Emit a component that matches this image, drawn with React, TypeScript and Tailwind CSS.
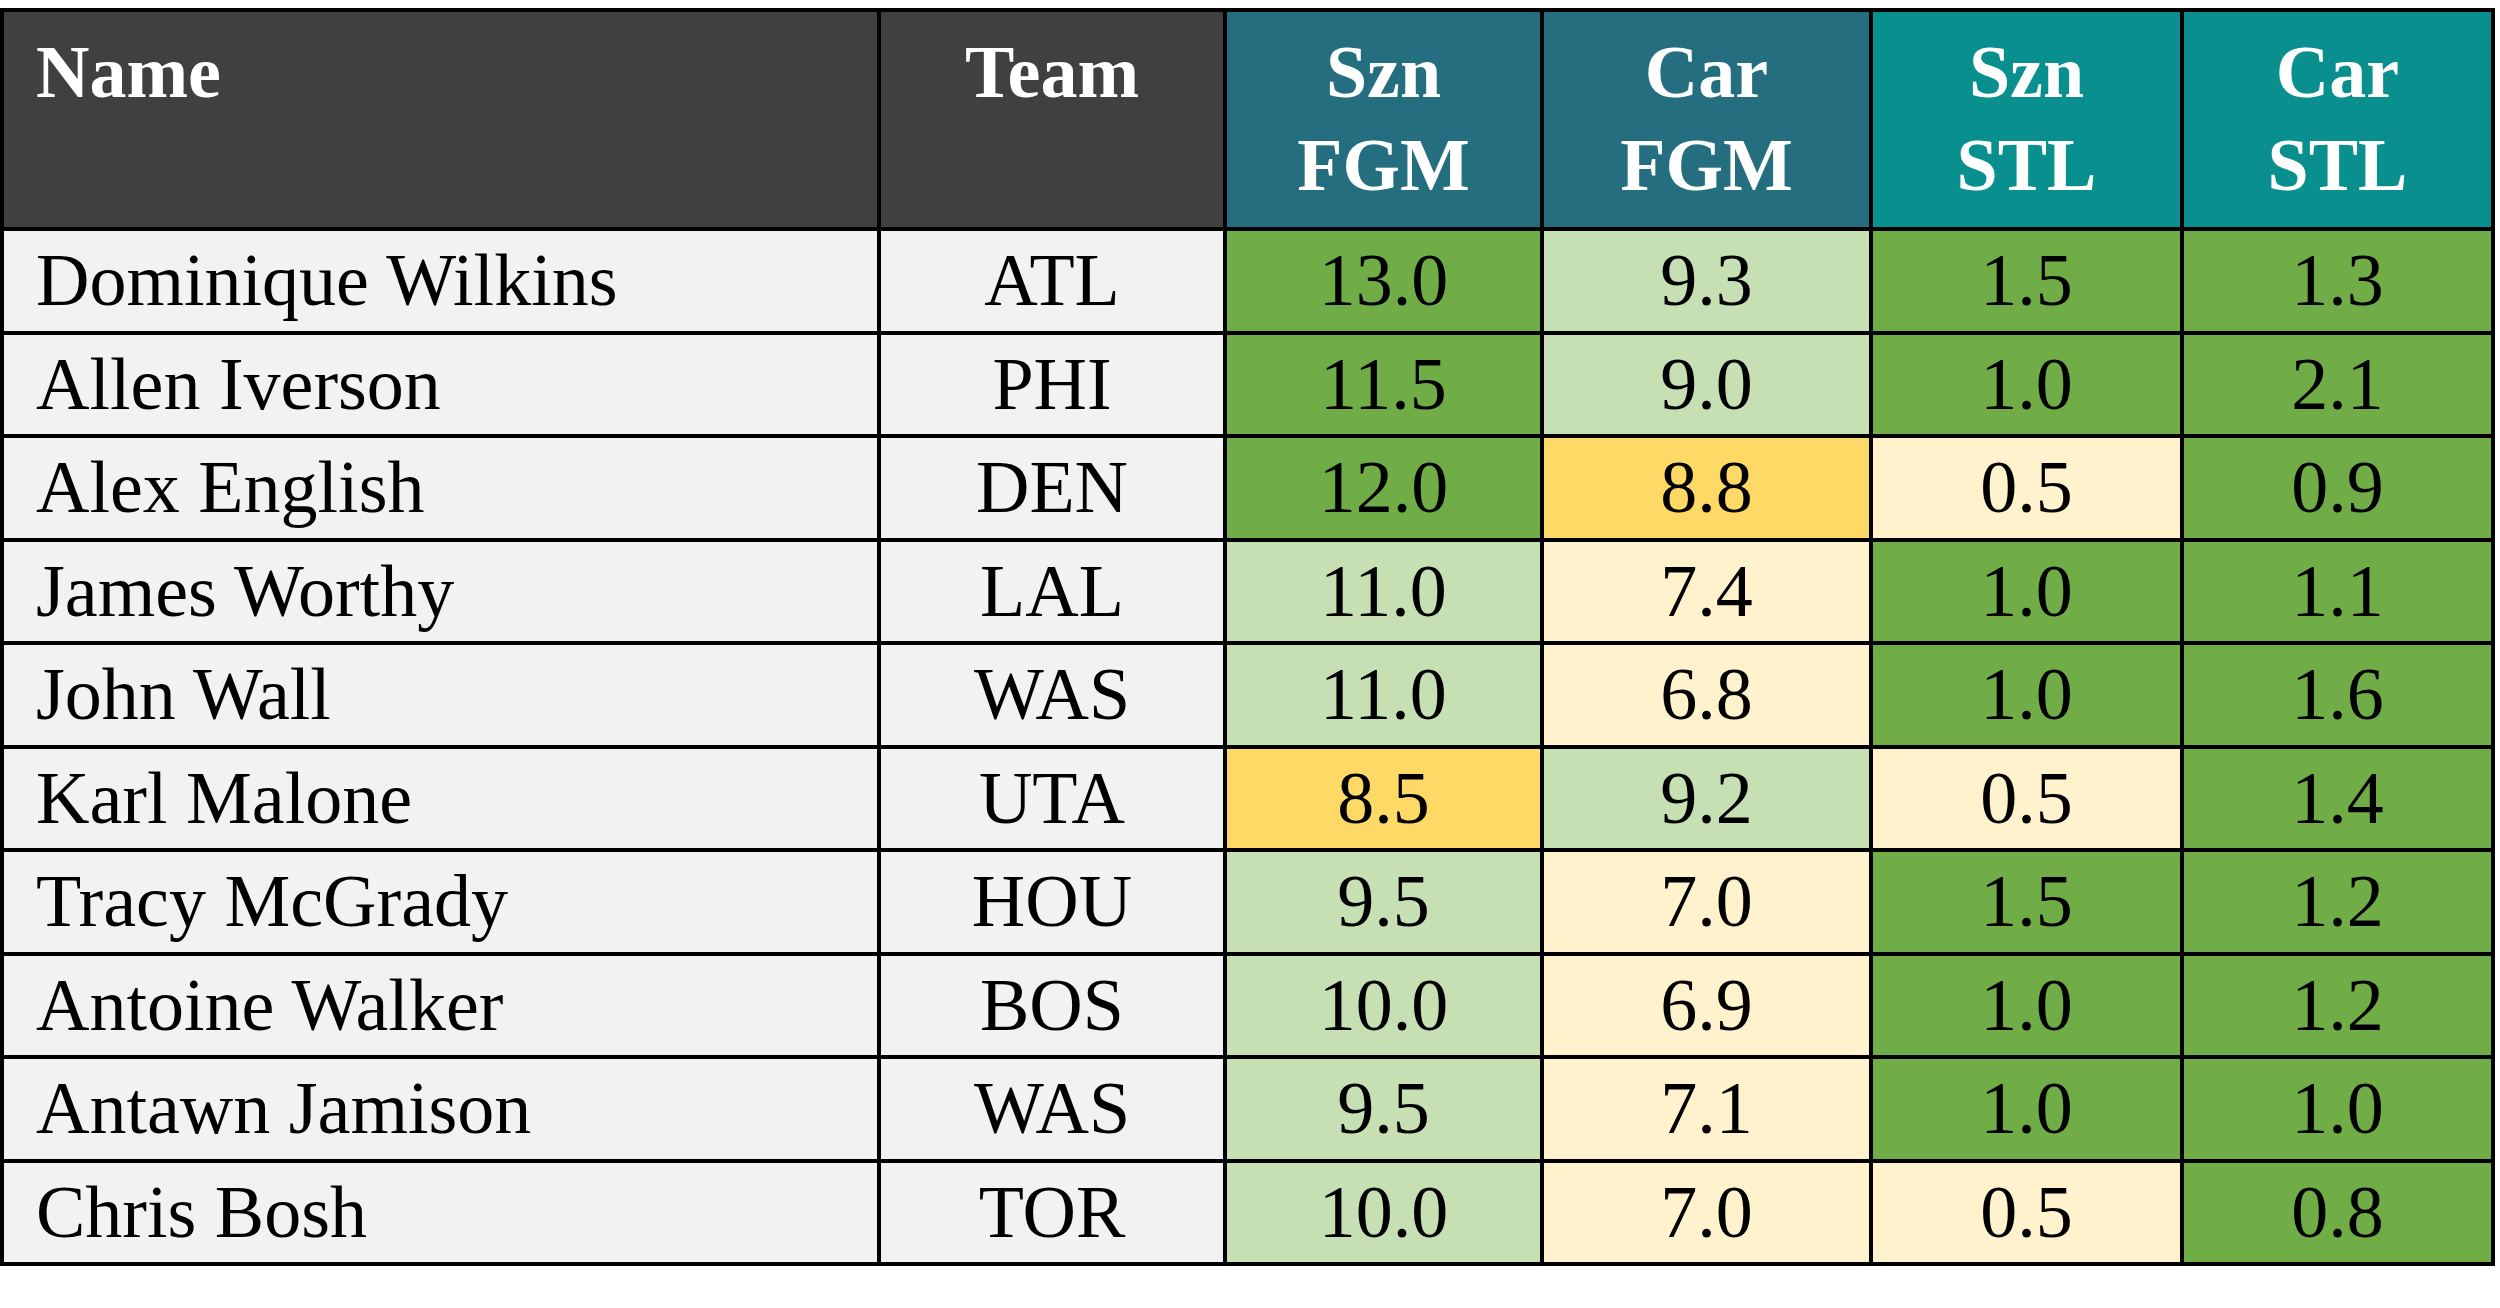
import React from "react";

type Row = {
  name: string;
  team: string;
  vals: [string, string, string, string];
  cols: [string, string, string, string];
};

const DG = "bg-[#70ad47]";
const LG = "bg-[#c6e0b4]";
const YE = "bg-[#ffd966]";
const LY = "bg-[#fff2cc]";

const rows: Row[] = [
  { name: "Dominique Wilkins", team: "ATL", vals: ["13.0", "9.3", "1.5", "1.3"], cols: [DG, LG, DG, DG] },
  { name: "Allen Iverson", team: "PHI", vals: ["11.5", "9.0", "1.0", "2.1"], cols: [DG, LG, DG, DG] },
  { name: "Alex English", team: "DEN", vals: ["12.0", "8.8", "0.5", "0.9"], cols: [DG, YE, LY, DG] },
  { name: "James Worthy", team: "LAL", vals: ["11.0", "7.4", "1.0", "1.1"], cols: [LG, LY, DG, DG] },
  { name: "John Wall", team: "WAS", vals: ["11.0", "6.8", "1.0", "1.6"], cols: [LG, LY, DG, DG] },
  { name: "Karl Malone", team: "UTA", vals: ["8.5", "9.2", "0.5", "1.4"], cols: [YE, LG, LY, DG] },
  { name: "Tracy McGrady", team: "HOU", vals: ["9.5", "7.0", "1.5", "1.2"], cols: [LG, LY, DG, DG] },
  { name: "Antoine Walker", team: "BOS", vals: ["10.0", "6.9", "1.0", "1.2"], cols: [LG, LY, DG, DG] },
  { name: "Antawn Jamison", team: "WAS", vals: ["9.5", "7.1", "1.0", "1.0"], cols: [LG, LY, DG, DG] },
  { name: "Chris Bosh", team: "TOR", vals: ["10.0", "7.0", "0.5", "0.8"], cols: [LG, LY, LY, DG] },
];

export default function App() {
  return (
    <div className="w-[2500px] h-[1308px] bg-white pt-[8px]" style={{ fontFamily: '"Liberation Serif", "Times New Roman", serif' }}>
      <div className="w-[2495px] bg-black p-[4px] grid gap-[4px] grid-cols-[873px_342px_313px_325px_307px_307px] grid-rows-[215px_repeat(10,99.5px)]">
        <div className="bg-[#404040] text-white font-bold text-[74px] leading-[93px] pt-[14px] pl-[32px]">Name</div>
        <div className="bg-[#404040] text-white font-bold text-[74px] leading-[93px] pt-[14px] text-center">Team</div>
        <div className="bg-[#246e7f] text-white font-bold text-[74px] leading-[93px] pt-[14px] text-center">Szn<br />FGM</div>
        <div className="bg-[#246e7f] text-white font-bold text-[74px] leading-[93px] pt-[14px] text-center">Car<br />FGM</div>
        <div className="bg-[#088f8e] text-white font-bold text-[74px] leading-[93px] pt-[14px] text-center">Szn<br />STL</div>
        <div className="bg-[#088f8e] text-white font-bold text-[74px] leading-[93px] pt-[14px] text-center">Car<br />STL</div>
        {rows.map((r) => (
          <React.Fragment key={r.name}>
            <div className="bg-[#f2f2f2] text-black text-[74px] flex items-center pl-[32px] whitespace-nowrap">{r.name}</div>
            <div className="bg-[#f2f2f2] text-black text-[74px] flex items-center justify-center">{r.team}</div>
            {r.vals.map((v, i) => (
              <div key={i} className={`${r.cols[i]} text-black text-[74px] flex items-center justify-center`}>{v}</div>
            ))}
          </React.Fragment>
        ))}
      </div>
    </div>
  );
}
